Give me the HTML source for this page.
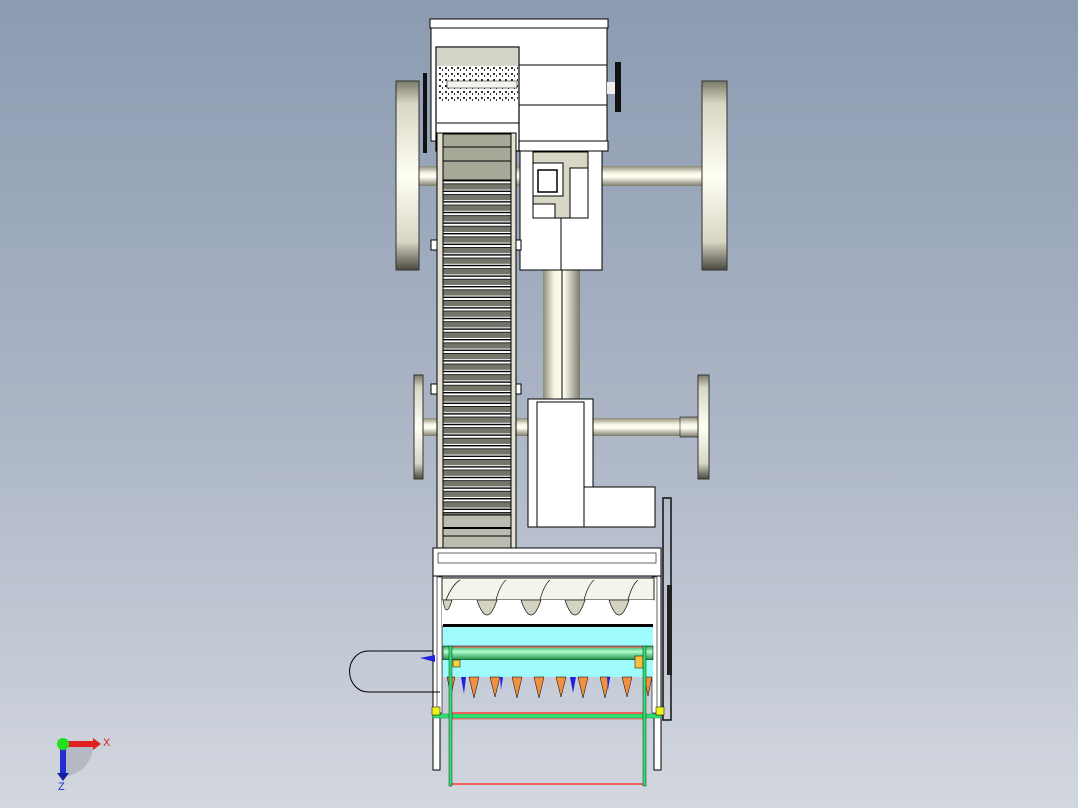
<!DOCTYPE html>
<html><head><meta charset="utf-8"><style>
html,body{margin:0;padding:0;width:1078px;height:808px;overflow:hidden}
svg{display:block}
text{font-family:"Liberation Sans",sans-serif}
</style></head><body>
<svg width="1078" height="808" viewBox="0 0 1078 808" xmlns="http://www.w3.org/2000/svg">
<defs>
<linearGradient id="bg" x1="0" y1="0" x2="0" y2="1">
<stop offset="0" stop-color="#8c9bb1"/><stop offset="0.5" stop-color="#aab4c5"/><stop offset="1" stop-color="#d3d7df"/>
</linearGradient>
<linearGradient id="cylH" x1="0" y1="0" x2="1" y2="0">
<stop offset="0" stop-color="#8e8c78"/><stop offset="0.3" stop-color="#f6f4e4"/><stop offset="0.55" stop-color="#fffff6"/><stop offset="1" stop-color="#7c7a68"/>
</linearGradient>
<linearGradient id="cylV" x1="0" y1="0" x2="0" y2="1">
<stop offset="0" stop-color="#8e8c78"/><stop offset="0.35" stop-color="#f6f4e4"/><stop offset="0.55" stop-color="#fffff6"/><stop offset="1" stop-color="#7c7a68"/>
</linearGradient>
<linearGradient id="wheel" x1="0" y1="0" x2="0" y2="1">
<stop offset="0" stop-color="#7c7a68"/><stop offset="0.12" stop-color="#d8d6c4"/><stop offset="0.5" stop-color="#fffff4"/><stop offset="0.85" stop-color="#d8d6c4"/><stop offset="1" stop-color="#4a4a40"/>
</linearGradient>
<linearGradient id="green" x1="0" y1="0" x2="0" y2="1">
<stop offset="0" stop-color="#2ea050"/><stop offset="0.4" stop-color="#b0ffd0"/><stop offset="1" stop-color="#1c8a40"/>
</linearGradient>
<pattern id="slat" x="443" y="180" width="70" height="10.6" patternUnits="userSpaceOnUse">
<rect width="70" height="10.6" fill="#fff"/>
<rect y="0" width="70" height="1.4" fill="#000"/>
<rect y="4" width="70" height="5.6" fill="#72756a"/>
<rect y="3.4" width="70" height="0.8" fill="#000"/>
</pattern>
<pattern id="perf" width="6" height="6" patternUnits="userSpaceOnUse">
<rect width="6" height="6" fill="#fff"/><rect x="1" y="1" width="2" height="2" fill="#333"/><rect x="4" y="3" width="1" height="2" fill="#333"/>
</pattern>
</defs>
<rect width="1078" height="808" fill="url(#bg)"/>

<rect x="419" y="166" width="284" height="20" fill="url(#cylV)"/>
<rect x="423" y="418" width="277" height="18" fill="url(#cylV)"/>
<rect x="680" y="417" width="20" height="20" fill="url(#cylV)" stroke="#000" stroke-width="0.5"/>
<rect x="396" y="81" width="23" height="189" fill="url(#wheel)" stroke="#333" stroke-width="1"/>
<rect x="702" y="81" width="25" height="189" fill="url(#wheel)" stroke="#333" stroke-width="1"/>
<rect x="414" y="375" width="9" height="104" fill="url(#wheel)" stroke="#333" stroke-width="1"/>
<rect x="698" y="375" width="11" height="104" fill="url(#wheel)" stroke="#333" stroke-width="1"/>
<rect x="543" y="268" width="37" height="133" fill="url(#cylH)"/>
<line x1="562" y1="268" x2="562" y2="400" stroke="#000"/>

<rect x="430" y="19" width="178" height="9" fill="#fff" stroke="#000"/>
<rect x="431" y="28" width="176" height="113" fill="#fff" stroke="#000"/>
<line x1="519" y1="65" x2="607" y2="65" stroke="#000"/>
<line x1="519" y1="105" x2="607" y2="105" stroke="#000"/>
<rect x="516" y="141" width="92" height="10" fill="#fff" stroke="#000"/>
<rect x="423" y="73" width="4" height="80" fill="#111"/>
<rect x="615" y="62" width="6" height="50" fill="#111"/>
<rect x="607" y="82" width="8" height="12" fill="#eee"/>
<rect x="436" y="47" width="83" height="104" fill="#fff" stroke="#000" stroke-width="1.2"/>
<rect x="437" y="48" width="81" height="18" fill="#d4d4c8"/>
<rect x="437" y="67" width="81" height="34" fill="url(#perf)"/>
<rect x="447" y="81" width="70" height="7" fill="#f4f4ec" stroke="#000" stroke-width="0.5"/>
<line x1="437" y1="123" x2="519" y2="123" stroke="#000"/>

<rect x="520" y="151" width="82" height="119" fill="#fff" stroke="#000"/>
<rect x="533" y="152" width="55" height="66" fill="#d8d6c4" stroke="#000"/>
<rect x="533" y="163" width="30" height="33" fill="#fff" stroke="#000"/>
<rect x="538" y="170" width="19" height="22" fill="#fff" stroke="#000" stroke-width="1.5"/>
<rect x="533" y="204" width="22" height="14" fill="#fff" stroke="#000"/>
<rect x="570" y="168" width="18" height="50" fill="#fff" stroke="#000"/>
<line x1="561" y1="218" x2="561" y2="270" stroke="#000"/>

<rect x="437" y="133" width="79" height="415" fill="#e4e2d2" stroke="#000"/>
<rect x="443" y="134" width="68" height="46" fill="#a8a898" stroke="#000"/>
<line x1="443" y1="147" x2="511" y2="147" stroke="#000"/>
<line x1="443" y1="161" x2="511" y2="161" stroke="#000"/>
<rect x="443" y="180" width="68" height="335" fill="url(#slat)"/>
<rect x="443" y="515" width="68" height="33" fill="#bcbcb0" stroke="#000"/>
<line x1="443" y1="528" x2="511" y2="528" stroke="#000" stroke-width="2"/>
<line x1="443" y1="536" x2="511" y2="536" stroke="#000"/>
<line x1="443" y1="134" x2="443" y2="548" stroke="#000"/>
<line x1="511" y1="134" x2="511" y2="548" stroke="#000"/>
<rect x="431" y="240" width="6" height="10" fill="#fff" stroke="#000"/>
<rect x="516" y="240" width="5" height="10" fill="#fff" stroke="#000"/>
<rect x="431" y="384" width="6" height="10" fill="#fff" stroke="#000"/>
<rect x="516" y="384" width="5" height="10" fill="#fff" stroke="#000"/>

<rect x="528" y="399" width="65" height="128" fill="#fff" stroke="#000"/>
<rect x="537" y="402" width="47" height="125" fill="#fff" stroke="#000"/>
<rect x="584" y="487" width="71" height="40" fill="#fff" stroke="#000"/>
<rect x="663" y="498" width="8" height="222" fill="none" stroke="#111" stroke-width="1.5"/>
<rect x="667" y="585" width="5" height="90" fill="#222"/>

<rect x="433" y="548" width="228" height="28" fill="#fff" stroke="#000"/>
<rect x="438" y="553" width="218" height="10" fill="#fff" stroke="#000" stroke-width="0.6"/>
<rect x="433" y="576" width="7" height="194" fill="#fff" stroke="#000"/>
<rect x="654" y="576" width="7" height="194" fill="#fff" stroke="#000"/>
<rect x="437" y="577" width="5" height="136" fill="#fff" stroke="#000" stroke-width="0.6"/>
<rect x="652" y="577" width="5" height="136" fill="#fff" stroke="#000" stroke-width="0.6"/>
<rect x="442" y="578" width="212" height="22" fill="#f4f4ea" stroke="#222"/>
<rect x="442" y="600" width="212" height="25" fill="#fff"/>
<g fill="#d4d2c0" stroke="#222" stroke-width="0.8">
<path d="M477 600 Q487 630 497 600 Z"/><path d="M521 600 Q531 630 541 600 Z"/><path d="M565 600 Q575 630 585 600 Z"/><path d="M609 600 Q619 630 629 600 Z"/>
<path d="M443 600 Q446 620 452 600 Z"/>
</g>
<g fill="none" stroke="#222" stroke-width="0.8">
<path d="M446 600 Q452 585 460 580"/><path d="M496 600 Q500 585 506 580"/><path d="M540 600 Q544 585 550 580"/><path d="M584 600 Q588 585 594 580"/><path d="M628 600 Q632 585 638 580"/>
</g>
<rect x="443" y="624" width="210" height="3" fill="#000"/>
<rect x="443" y="627" width="210" height="19" fill="#a0fcfc"/>
<rect x="443" y="646" width="210" height="14" fill="url(#green)" stroke="#000" stroke-width="0.5"/>
<line x1="453" y1="647" x2="643" y2="647" stroke="#e86060" stroke-width="1.2"/>
<rect x="443" y="660" width="210" height="17" fill="#a0fcfc"/>
<rect x="453" y="660" width="7" height="7" fill="#f8d040" stroke="#000" stroke-width="0.5"/>
<rect x="635" y="656" width="8" height="12" fill="#f8c040" stroke="#000" stroke-width="0.5"/>
<g fill="#f09040" stroke="#000" stroke-width="0.5">
<path d="M447 677 L455 677 451 695Z"/><path d="M469 677 L479 677 474 698Z"/><path d="M490 677 L500 677 495 697Z"/><path d="M512 677 L522 677 517 698Z"/><path d="M534 677 L544 677 539 698Z"/><path d="M556 677 L566 677 561 697Z"/><path d="M578 677 L588 677 583 698Z"/><path d="M600 677 L610 677 605 698Z"/><path d="M622 677 L632 677 627 697Z"/><path d="M644 677 L652 677 648 696Z"/>
</g>
<g fill="#2020e0">
<path d="M461 677 L466 677 464 694Z"/><path d="M500 677 L503 677 501 690Z"/><path d="M570 677 L576 677 573 693Z"/><path d="M607 677 L610 677 608 690Z"/>
</g>
<rect x="433" y="714" width="228" height="4" fill="#30e070" stroke="#1a9040" stroke-width="0.5"/>
<line x1="452" y1="713" x2="644" y2="713" stroke="#f06060" stroke-width="2"/>
<line x1="452" y1="719" x2="644" y2="719" stroke="#f06060" stroke-width="1"/>
<line x1="452" y1="784" x2="644" y2="784" stroke="#f06060" stroke-width="2"/>
<rect x="449" y="646" width="3" height="140" fill="#30e070" stroke="#000" stroke-width="0.4"/>
<rect x="643" y="646" width="3" height="140" fill="#30e070" stroke="#000" stroke-width="0.4"/>
<rect x="432" y="707" width="8" height="8" fill="#f0f020" stroke="#000" stroke-width="0.5"/>
<rect x="656" y="707" width="8" height="8" fill="#f0f020" stroke="#000" stroke-width="0.5"/>
<path d="M433 651 H368 A18 20 0 0 0 368 692 H440" fill="none" stroke="#000"/>
<path d="M420 658 L435 655 L435 662Z" fill="#2020e0"/>

<path d="M63 746 A30 30 0 0 1 93 746 A30 30 0 0 1 63 776Z" fill="#9aa0aa" opacity="0.5"/>
<rect x="63" y="741" width="30" height="6" fill="#e02020"/>
<path d="M93 738 L101 744 L93 750Z" fill="#e02020"/>
<rect x="60" y="744" width="6" height="30" fill="#2030d0"/>
<path d="M57 773 L63 781 L69 773Z" fill="#1020a0"/>
<circle cx="63" cy="744" r="6" fill="#20e020"/>
<text x="103" y="746" font-size="11" fill="#e02020">X</text>
<text x="58" y="790" font-size="11" fill="#2030d0">Z</text>
</svg>
</body></html>
